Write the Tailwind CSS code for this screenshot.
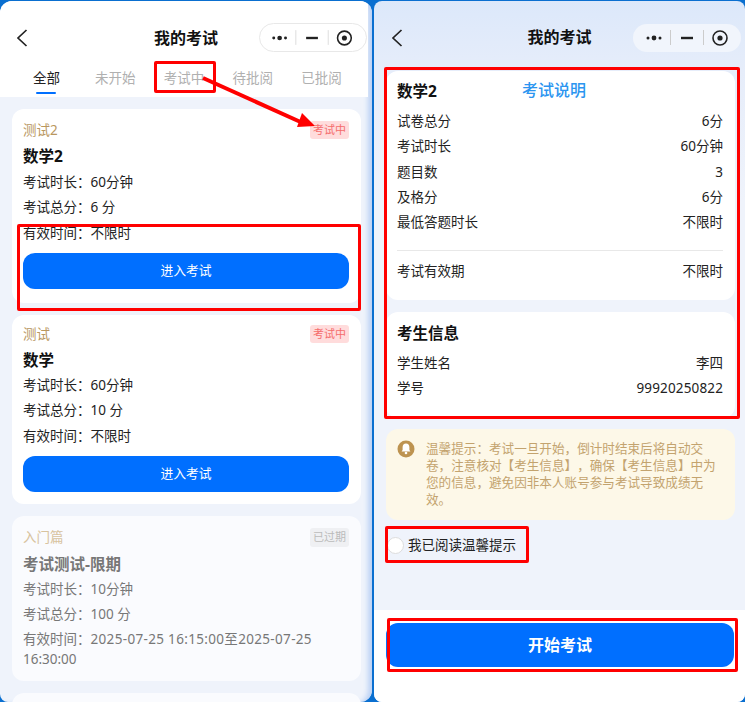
<!DOCTYPE html>
<html lang="zh-CN">
<head>
    <meta charset="UTF-8">
    <title>我的考试</title>
    <script src="https://cdn.jsdelivr.net/npm/@tailwindcss/browser@4"></script>
</head>
<body class="relative w-[745px] h-[702px] overflow-hidden bg-[#0a6fd0] font-['Noto_Sans','Noto_Sans_CJK_SC',sans-serif] text-[13.5px] text-[#222]">
<div class="flex h-[702px] pt-px gap-[2px]">

    <!-- left phone -->
    <div class="w-[372px] h-[701px] flex flex-col overflow-hidden rounded-t-[12px] rounded-r-[12px] rounded-bl-[8px] bg-[#eff3fb] shadow-[inset_-6px_0_5px_-2px_#bcd2f5]">
        <div class="bg-white h-[96px] shrink-0 mr-[4px]">
            <div class="relative h-[58px] flex items-center justify-center">
                <svg class="absolute left-[16px] top-[28px]" width="12" height="18" viewBox="0 0 12 18" fill="none" stroke="#222" stroke-width="1.7"><path d="M10.5 1 L2 9 L10.5 17"/></svg>
                <span class="text-[16px] font-bold text-[#111] mt-[16px] ml-[4px]">我的考试</span>
                <div class="absolute left-[259px] top-[22px] w-[108px] h-[29px] rounded-full border border-[#e8e8e8] bg-white flex items-center">
                    <svg width="108" height="27" viewBox="0 0 108 27" fill="#222">
                        <circle cx="14" cy="14" r="1.5"/><circle cx="20" cy="14" r="2.4"/><circle cx="26" cy="14" r="1.5"/>
                        <rect x="36" y="6" width="1" height="15" fill="#ddd"/>
                        <rect x="47" y="12.8" width="12" height="2.4"/>
                        <rect x="69" y="6" width="1" height="15" fill="#ddd"/>
                        <circle cx="86" cy="14" r="7" fill="none" stroke="#222" stroke-width="1.6"/><circle cx="86" cy="14" r="2.6"/>
                    </svg>
                </div>
            </div>
            <div class="flex h-[38px] px-[12px] text-[#b0b0b0]">
                <div class="w-[70px] flex flex-col items-center pt-[9px] leading-[20px] text-[#222]">全部<span class="w-[20px] h-[2px] bg-[#006fff] rounded mt-[4px]"></span></div>
                <div class="w-[70px] flex justify-center pt-[9px] leading-[20px]">未开始</div>
                <div class="w-[70px] flex justify-center pt-[9px] leading-[20px]">考试中</div>
                <div class="w-[70px] flex justify-center pt-[9px] leading-[20px]">待批阅</div>
                <div class="w-[70px] flex justify-center pt-[9px] leading-[20px]">已批阅</div>
            </div>
        </div>

        <div class="flex flex-col gap-[12px] pt-[12px] pl-[12px] w-[361px]">
            <div class="bg-white rounded-[12px] h-[194px] pl-[11px] pr-[12px] pt-[12px]">
                <div class="flex justify-between items-center h-[18px] text-[#b9975f]">测试2<span class="w-[39px] h-[18px] rounded-[3px] bg-[#ffdcdc] text-[#f56c6c] text-[11px] flex items-center justify-center">考试中</span></div>
                <p class="text-[15.5px] font-bold text-[#111] mt-[5px] leading-[24px]">数学2</p>
                <p class="mt-[2px] leading-[25.3px]">考试时长：60分钟</p>
                <p class="leading-[25.3px]">考试总分：6 分</p>
                <p class="leading-[25.3px]">有效时间：不限时</p>
                <div class="mt-[7px] h-[36px] rounded-[12px] bg-[#006fff] text-white text-[12.8px] flex items-center justify-center">进入考试</div>
            </div>
            <div class="bg-white rounded-[12px] h-[189px] pl-[11px] pr-[12px] pt-[10px]">
                <div class="flex justify-between items-center h-[18px] text-[#b9975f]">测试<span class="w-[39px] h-[18px] rounded-[3px] bg-[#ffdcdc] text-[#f56c6c] text-[11px] flex items-center justify-center">考试中</span></div>
                <p class="text-[15.5px] font-bold text-[#111] mt-[5px] leading-[24px]">数学</p>
                <p class="mt-[1px] leading-[25.3px]">考试时长：60分钟</p>
                <p class="leading-[25.3px]">考试总分：10 分</p>
                <p class="leading-[25.3px]">有效时间：不限时</p>
                <div class="mt-[7px] h-[36px] rounded-[12px] bg-[#006fff] text-white text-[12.8px] flex items-center justify-center">进入考试</div>
            </div>
            <div class="bg-[#fafbfe] rounded-[12px] h-[165px] pl-[11px] pr-[12px] pt-[12px] text-[#777]">
                <div class="flex justify-between items-center h-[19px] text-[#d8c39f]">入门篇<span class="w-[39px] h-[19px] rounded-[3px] bg-[#eff0f3] text-[#bbb] text-[11px] flex items-center justify-center">已过期</span></div>
                <p class="text-[15.5px] font-bold text-[#777] mt-[5px] leading-[24px]">考试测试-限期</p>
                <p class="mt-[1px] leading-[25.3px]">考试时长：10分钟</p>
                <p class="leading-[25.3px]">考试总分：100 分</p>
                <p class="leading-[20px] mt-[1px] w-[325px]">有效时间：<span class="tracking-[0.33px]">2025-07-25 16:15:00至2025-07-25</span> 16:30:00</p>
            </div>
            <div class="bg-[#fafbfe] rounded-[12px] h-[40px]"></div>
        </div>
    </div>

    <!-- right phone -->
    <div class="w-[371px] h-[701px] flex flex-col overflow-hidden rounded-t-[8px] rounded-b-[8px] bg-[linear-gradient(#dce8fa,#e6edfa_70px,#eff3fb_200px)]">
        <div class="relative h-[65px] shrink-0 flex justify-center">
            <svg class="absolute left-[17px] top-[28px]" width="12" height="18" viewBox="0 0 12 18" fill="none" stroke="#222" stroke-width="1.7"><path d="M10.5 1 L2 9 L10.5 17"/></svg>
            <span class="text-[16px] font-bold text-[#111] mt-[24px]">我的考试</span>
            <div class="absolute left-[259px] top-[23px] w-[108px] h-[28px] rounded-full bg-[#f1f5fc]">
                <svg width="108" height="28" viewBox="0 0 108 28" fill="#222">
                    <circle cx="15" cy="14" r="1.5"/><circle cx="21" cy="14" r="2.4"/><circle cx="27" cy="14" r="1.5"/>
                    <rect x="37" y="6" width="1" height="15" fill="#ccc"/>
                    <rect x="48" y="12.8" width="12" height="2.4"/>
                    <rect x="70" y="6" width="1" height="15" fill="#ccc"/>
                    <circle cx="87" cy="14" r="7" fill="none" stroke="#222" stroke-width="1.6"/><circle cx="87" cy="14" r="2.6"/>
                </svg>
            </div>
        </div>

        <div class="ml-[12px] mr-[10px] h-[229px] rounded-[12px] bg-white pl-[11px] pr-[12px] pt-[8px] shrink-0 mt-[5px]">
            <div class="relative h-[24px] leading-[24px]"><span class="text-[15.5px] font-bold text-[#111]">数学2</span><span class="absolute left-[125px] top-[-1px] text-[16px] font-medium text-[#2b95f0]">考试说明</span></div>
            <div class="flex justify-between leading-[25.3px] mt-[6px]"><span>试卷总分</span><span>6分</span></div>
            <div class="flex justify-between leading-[25.3px]"><span>考试时长</span><span>60分钟</span></div>
            <div class="flex justify-between leading-[25.3px]"><span>题目数</span><span>3</span></div>
            <div class="flex justify-between leading-[25.3px]"><span>及格分</span><span>6分</span></div>
            <div class="flex justify-between leading-[25.3px]"><span>最低答题时长</span><span>不限时</span></div>
            <div class="border-t border-[#e8e8e8] mt-[15px] pt-[8px] flex justify-between leading-[25.3px]"><span>考试有效期</span><span>不限时</span></div>
        </div>

        <div class="ml-[12px] mr-[10px] h-[106px] rounded-[12px] bg-white pl-[11px] pr-[12px] pt-[9px] shrink-0 mt-[12px]">
            <p class="text-[15.5px] font-bold text-[#111] leading-[24px]">考生信息</p>
            <div class="flex justify-between leading-[25.3px] mt-[6px]"><span>学生姓名</span><span>李四</span></div>
            <div class="flex justify-between leading-[25.3px]"><span>学号</span><span class="tracking-[0.15px]">99920250822</span></div>
        </div>

        <div class="ml-[12px] mr-[10px] h-[91px] rounded-[12px] bg-[#fdf8e8] flex shrink-0 mt-[11px] pl-[11px] pt-[11px]">
            <svg class="shrink-0" width="18" height="18" viewBox="0 0 18 18"><circle cx="9" cy="9" r="8.500" fill="#bd9350"/><path d="M9 3.600c-2.200 0-3.400 1.700-3.400 3.700v2.600L4.600 11.600h8.800l-1-1.700V7.300c0-2-1.200-3.700-3.400-3.700z" fill="#fff"/><circle cx="9" cy="13" r="1.300" fill="#fff"/></svg>
            <p class="w-[292px] ml-[11px] text-[12.6px] leading-[17px] text-[#c3a36e] [text-spacing-trim:space-all]">温馨提示：考试一旦开始，倒计时结束后将自动交卷，注意核对【考生信息】，确保【考生信息】中为您的信息，避免因非本人账号参与考试导致成绩无效。</p>
        </div>

        <div class="flex items-center h-[24px] mt-[13px] ml-[13px] shrink-0">
            <span class="w-[17px] h-[17px] rounded-full bg-white border border-[#ddd]"></span>
            <span class="ml-[4px] text-[#222]">我已阅读温馨提示</span>
        </div>

        <div class="mt-[53px] flex-1 bg-white pt-[13px] pl-[12px] pr-[11px]">
            <div class="h-[44px] rounded-[12px] bg-[#006fff] text-white text-[16px] font-bold flex items-center justify-center">开始考试</div>
        </div>
    </div>
</div>

<!-- red annotations drawn over the screenshots -->
<div class="absolute left-[154px] top-[61px] w-[62px] h-[32px] border-[3px] border-[#f00] rounded-[2px]"></div>
<div class="absolute left-[17px] top-[224px] w-[344px] h-[87px] border-[3px] border-[#f00] rounded-[2px]"></div>
<div class="absolute left-[384px] top-[67px] w-[356px] h-[352px] border-[3px] border-[#f00] rounded-[2px]"></div>
<div class="absolute left-[385px] top-[526px] w-[144px] h-[37px] border-[3px] border-[#f00] rounded-[2px]"></div>
<div class="absolute left-[387px] top-[618px] w-[351px] h-[54px] border-[3px] border-[#f00] rounded-[2px]"></div>
<svg class="absolute left-0 top-0" width="745" height="702" viewBox="0 0 745 702">
    <line x1="203" y1="78" x2="305" y2="124" stroke="#f00" stroke-width="4"/>
    <polygon points="297,127 315,126 302,113" fill="#f00"/>
</svg>
</body>
</html>
